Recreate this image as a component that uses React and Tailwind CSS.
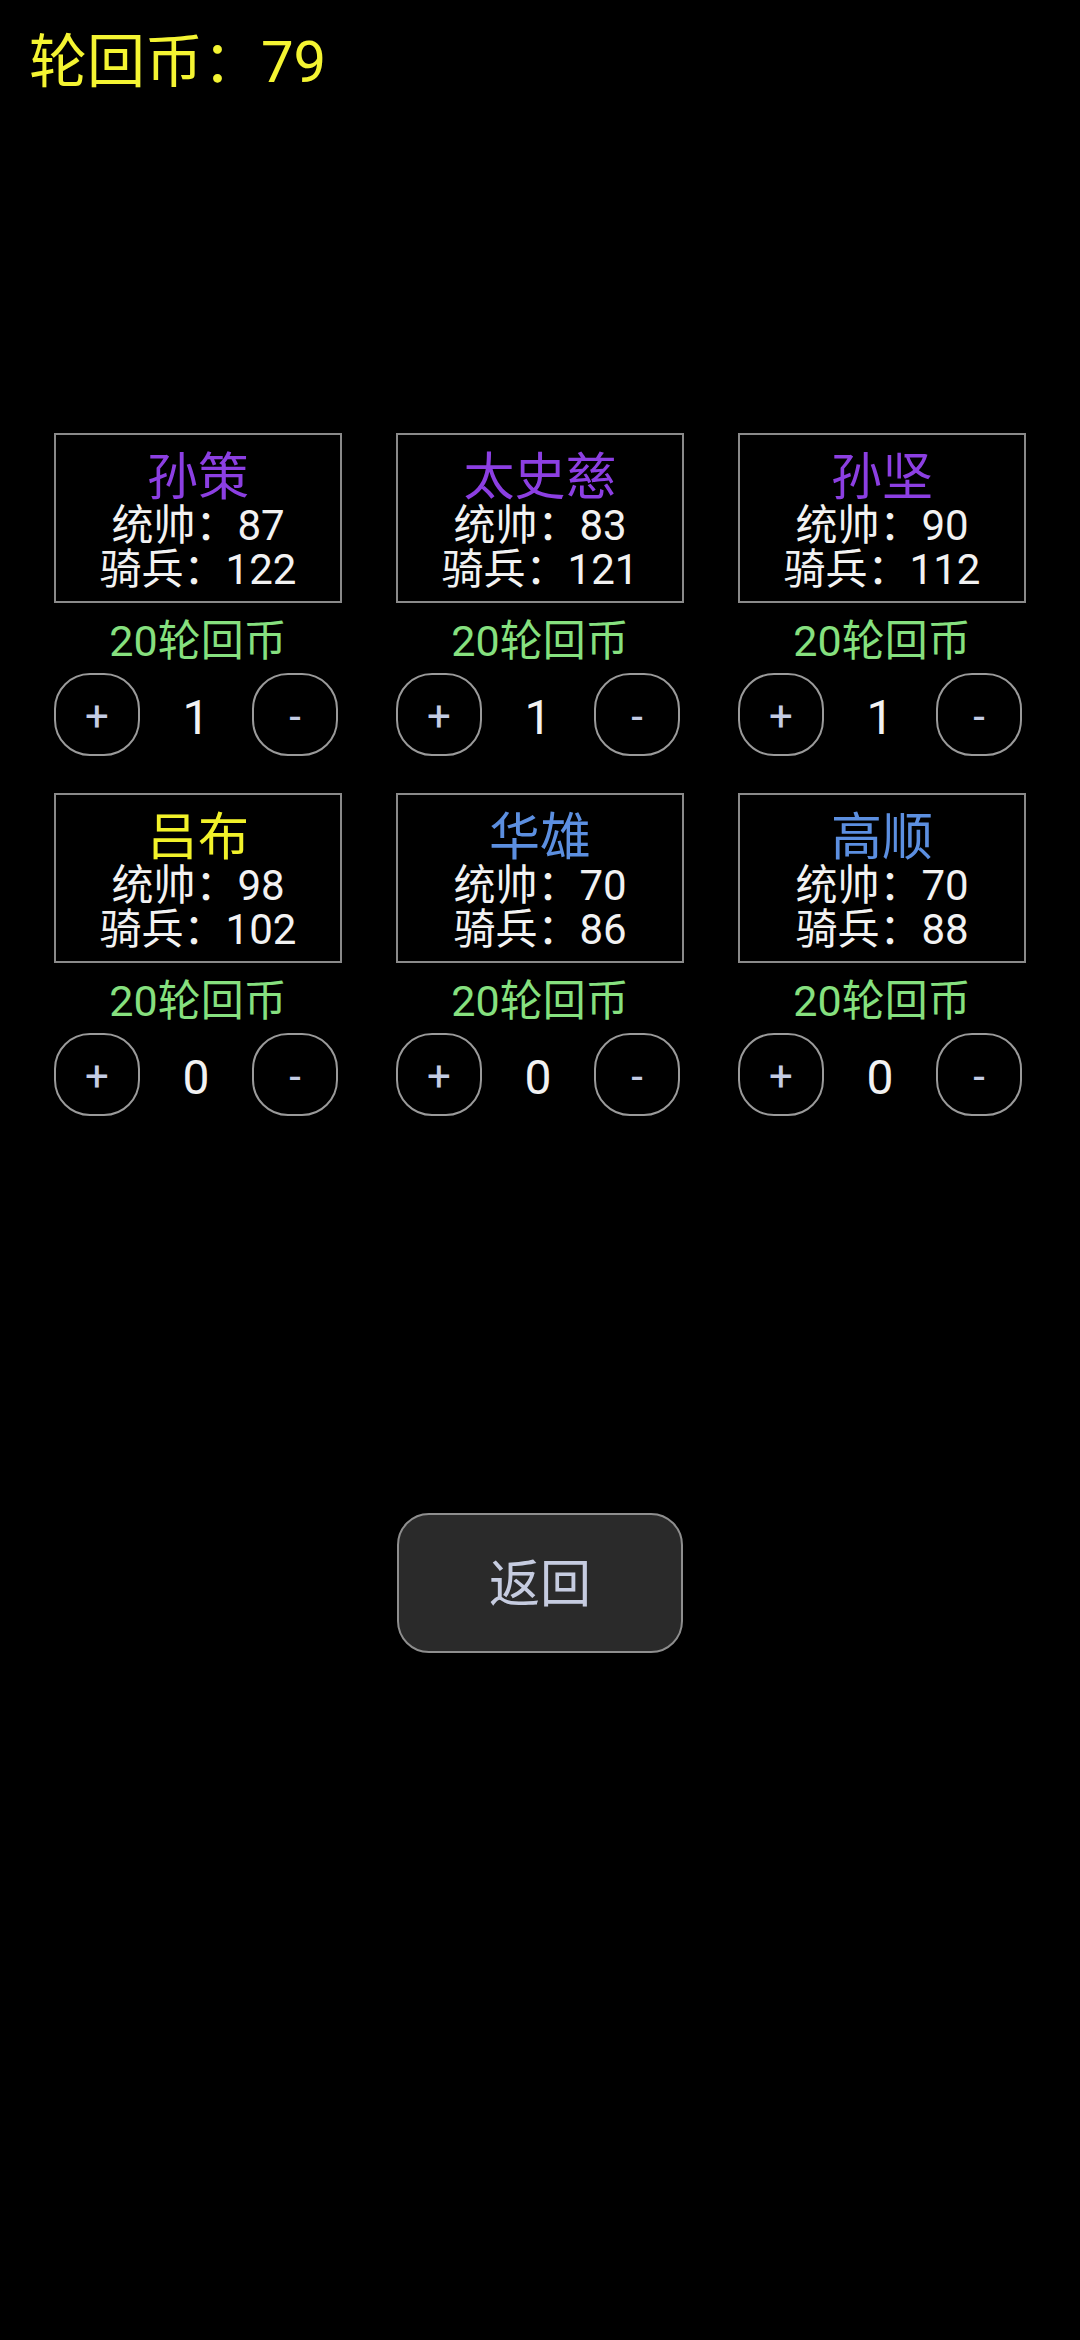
const heroes = [
  { name: '孙策', color: 'text-[#8c3fe2]', lead: 87, cav: 122, count: 1 },
  { name: '太史慈', color: 'text-[#8c3fe2]', lead: 83, cav: 121, count: 1 },
  { name: '孙坚', color: 'text-[#8c3fe2]', lead: 90, cav: 112, count: 1 },
  { name: '吕布', color: 'text-[#f2f22a]', lead: 98, cav: 102, count: 0 },
  { name: '华雄', color: 'text-[#5c8fe0]', lead: 70, cav: 86, count: 0 },
  { name: '高顺', color: 'text-[#5c8fe0]', lead: 70, cav: 88, count: 0 },
];

function HeroCard({ hero }) {
  return (
    <div className="flex flex-col">
      <div className="h-[170px] border-2 border-[#8a8a8a] flex flex-col items-center pt-[17px]">
        <div className={`text-[51px] leading-[52px] ${hero.color}`}>{hero.name}</div>
        <div className="text-[42px] leading-[44px] text-[#f2f2f2]">统帅：{hero.lead}</div>
        <div className="text-[42px] leading-[44px] text-[#f2f2f2]">骑兵：{hero.cav}</div>
      </div>
      <div className="mt-[13px] h-[50px] flex items-center justify-center text-[43px] text-[#86e07f]">
        20轮回币
      </div>
      <div className="mt-[7px] flex items-center justify-between pr-[4px]">
        <button className="w-[86px] h-[83px] pt-[4px] rounded-[36px] border-2 border-[#9a9a9a] text-[42px] leading-none text-[#c4cce4] flex items-center justify-center">
          +
        </button>
        <span className="mt-[6px] text-[48px] leading-none text-[#f2f2f2]">{hero.count}</span>
        <button className="w-[86px] h-[83px] pt-[4px] rounded-[36px] border-2 border-[#9a9a9a] text-[42px] leading-none text-[#c4cce4] flex items-center justify-center">
          -
        </button>
      </div>
    </div>
  );
}

export default function App() {
  return (
    <div className="w-[1080px] min-h-[2340px] bg-black font-['Roboto','Noto_Sans_CJK_SC',sans-serif]">
      <div className="pl-[29px] pt-[33px] text-[58px] leading-[58px] text-[#f4f432]">轮回币：79</div>
      <div className="mt-[342px] pl-[54px] grid grid-cols-[288px_288px_288px] gap-x-[54px] gap-y-[37px]">
        {heroes.map((h) => (
          <HeroCard key={h.name} hero={h} />
        ))}
      </div>
      <div className="mt-[397px] flex justify-center">
        <button className="w-[286px] h-[140px] pt-[4px] rounded-[32px] border-2 border-[#8e8e8e] bg-[#2a2a2a] text-[51px] text-[#c6cce0]">
          返回
        </button>
      </div>
    </div>
  );
}
